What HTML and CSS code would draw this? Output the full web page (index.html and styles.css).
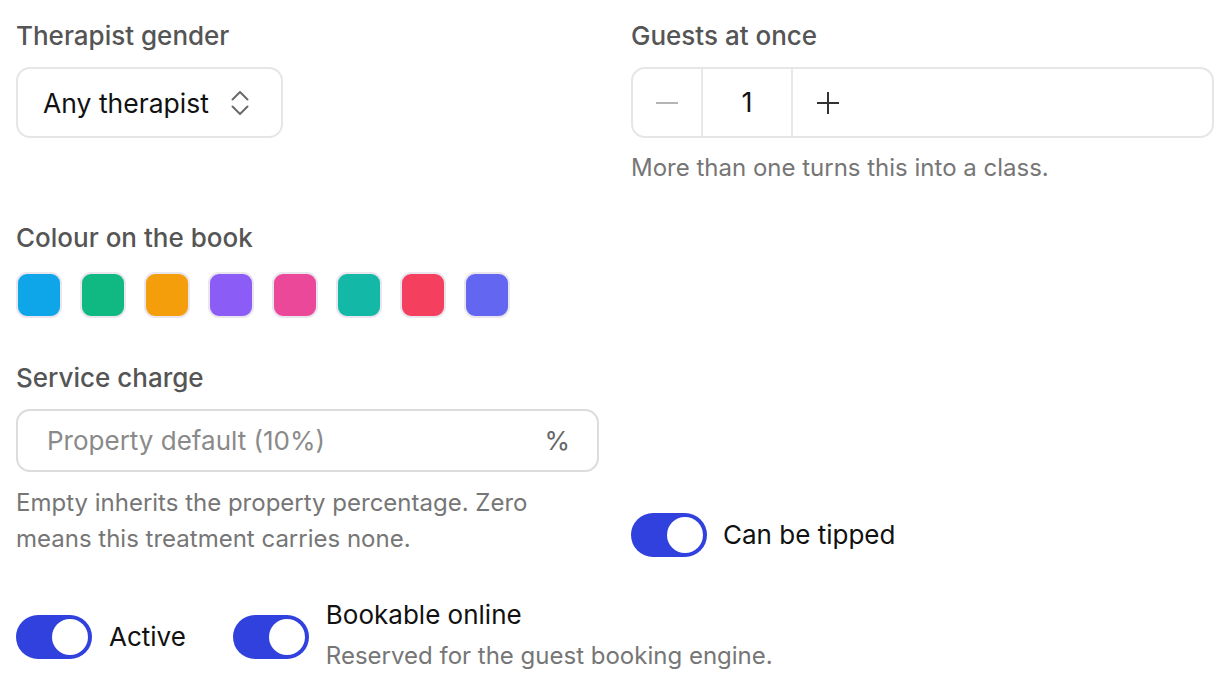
FILE: index.html
```html
<!DOCTYPE html>
<html lang="en">
<head>
    <meta charset="UTF-8">
    <meta name="viewport" content="width=device-width, initial-scale=1.0">
    <title>Treatment settings</title>
    <link rel="stylesheet" href="styles.css">
</head>
<body>
    <div class="form">
        <div class="field">
            <div class="label">Therapist gender</div>
            <div class="select">
                <span>Any therapist</span>
                <svg class="chev" width="18" height="26" viewBox="0 0 18 26" fill="none" stroke="#6b6b6b" stroke-width="2" stroke-linecap="round" stroke-linejoin="round">
                    <path d="M1.5 9.5 L9 2 L16.5 9.5"/>
                    <path d="M1.5 16.5 L9 24 L16.5 16.5"/>
                </svg>
            </div>
        </div>

        <div class="field">
            <div class="label">Guests at once</div>
            <div class="stepper">
                <button class="step minus" disabled>
                    <svg width="24" height="24" viewBox="0 0 24 24" stroke="#b4b4b4" stroke-width="2"><path d="M1 12 H23"/></svg>
                </button>
                <div class="step-value">1</div>
                <button class="step plus">
                    <svg width="24" height="24" viewBox="0 0 24 24" stroke="#333" stroke-width="2"><path d="M1 12 H23 M12 1 V23"/></svg>
                </button>
            </div>
            <p class="help">More than one turns this into a class.</p>
        </div>

        <div class="field colours">
            <div class="label">Colour on the book</div>
            <div class="swatches">
                <span class="swatch" style="background:#0ea5e9"></span>
                <span class="swatch" style="background:#10b981"></span>
                <span class="swatch" style="background:#f59e0b"></span>
                <span class="swatch" style="background:#8b5cf6"></span>
                <span class="swatch" style="background:#ec4899"></span>
                <span class="swatch" style="background:#14b8a6"></span>
                <span class="swatch" style="background:#f43f5e"></span>
                <span class="swatch" style="background:#6366f1"></span>
            </div>
        </div>
        <div></div>

        <div class="field charge">
            <div class="label">Service charge</div>
            <div class="input">
                <span class="placeholder">Property default (10%)</span>
                <span class="suffix">%</span>
            </div>
            <p class="help two">Empty inherits the property percentage. Zero means this treatment carries none.</p>
        </div>

        <div class="field tip">
            <div class="toggle-row">
                <span class="toggle on"><span class="knob"></span></span>
                <span class="toggle-text">Can be tipped</span>
            </div>
        </div>

        <div class="bottom">
            <div class="toggle-row">
                <span class="toggle on"><span class="knob"></span></span>
                <span class="toggle-text">Active</span>
            </div>
            <div class="toggle-row online">
                <span class="toggle on"><span class="knob"></span></span>
                <div>
                    <div class="toggle-text">Bookable online</div>
                    <p class="help">Reserved for the guest booking engine.</p>
                </div>
            </div>
        </div>
    </div>
</body>
</html>
```

FILE: styles.css
```css
body { margin: 0; font-family: Inter, "Noto Sans", sans-serif; background: #fff; color: #111; }
.form { display: grid; grid-template-columns: 1fr 1fr; column-gap: 32px; padding: 20px 16px 0 16px; }
.field { display: flex; flex-direction: column; align-items: flex-start; }
.label { font-size: 26px; line-height: 32px; font-weight: 500; color: #555; margin-bottom: 15px; }
.help { margin: 14px 0 0 0; font-size: 24px; line-height: 32px; color: #767676; }
.help.two { margin-top: 13px; line-height: 36px; }

.select { display: flex; align-items: center; gap: 22px; height: 71px; box-sizing: border-box; padding: 0 32px 0 25px; border: 2px solid #e6e6e6; border-radius: 14px; font-size: 26.5px; }

.stepper { display: flex; width: 100%; height: 71px; box-sizing: border-box; border: 2px solid #e6e6e6; border-radius: 14px; }
.step { display: flex; align-items: center; justify-content: center; width: 70px; padding: 0; border: none; background: none; }
.minus { border-right: 2px solid #e8e8e8; }
.step-value { display: flex; align-items: center; justify-content: center; width: 88px; border-right: 2px solid #e8e8e8; font-size: 27px; }

.colours { margin-top: 38px; }
.colours .label { margin-bottom: 18px; }
.swatches { display: flex; gap: 18px; }
.swatch { width: 46px; height: 46px; box-sizing: border-box; border-radius: 11px; border: 2px solid #e9e6ee; }

.charge { margin-top: 44px; }
.input { display: flex; align-items: center; justify-content: space-between; width: 100%; height: 63px; box-sizing: border-box; padding: 0 27px 0 29px; border: 2px solid #dcdcdc; border-radius: 14px; font-size: 26px; }
.placeholder { color: #8a8a8a; }
.suffix { color: #666; }

.tip { justify-content: flex-end; }
.toggle-row { display: flex; align-items: center; gap: 16px; }
.toggle { display: flex; align-items: center; justify-content: flex-end; width: 76px; height: 44px; box-sizing: border-box; padding: 0 4px; border-radius: 22px; background: #3041dd; }
.knob { width: 36px; height: 36px; border-radius: 50%; background: #fff; }
.toggle-text { font-size: 26px; line-height: 32px; color: #111; }

.bottom { grid-column: 1 / 3; display: flex; align-items: center; gap: 47px; margin-top: 42px; }
.bottom .toggle-row { gap: 17px; }
.online .help { margin-top: 7px; line-height: 36px; }
```
